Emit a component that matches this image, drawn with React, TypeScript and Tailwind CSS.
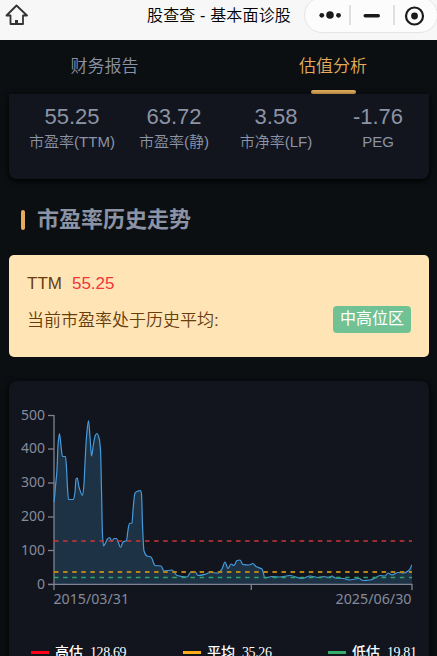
const metrics = [
  { label: '市盈率(TTM)', value: '55.25' },
  { label: '市盈率(静)', value: '63.72' },
  { label: '市净率(LF)', value: '3.58' },
  { label: 'PEG', value: '-1.76' },
];

const ticks = [
  { label: '500', y: 415.5 },
  { label: '400', y: 449 },
  { label: '300', y: 483 },
  { label: '200', y: 517 },
  { label: '100', y: 550.5 },
  { label: '0', y: 584.5 },
];

const levels = [
  { color: '#cb3636', y: 541, width: 1.3 },
  { color: '#b58518', y: 572, width: 2 },
  { color: '#2fa468', y: 577.5, width: 1.3 },
];

const points: [number, number][] = [
  [54, 502], [55.5, 486], [57, 470], [58, 445], [59.5, 433.5], [61, 446], [62.5, 456.5], [65.5, 456.5],
  [66.5, 468], [67.5, 488], [68.5, 499.5], [73.5, 499.5], [75, 492], [76, 479], [77.3, 478], [79, 487],
  [82.5, 495.5], [84, 484], [85, 463], [86.5, 437], [88.5, 420.5], [90, 437], [91.5, 456], [93.5, 444],
  [95.5, 435], [97, 433.5], [99, 438], [100.5, 450], [101.5, 490], [102.5, 535], [103.5, 546], [105.5, 543],
  [107.5, 539], [109.5, 537.5], [112, 541], [114, 538.5], [116.5, 538.5], [118.5, 543], [120.5, 547.5],
  [123, 542], [126.5, 540.5], [128, 530], [129.5, 523.5], [132, 523], [133, 510], [135, 493], [137, 491.5],
  [140.5, 490.5], [141.5, 494], [142.5, 525], [144, 551], [147, 556], [151, 557], [155, 565.5], [161, 566],
  [164, 571], [172, 570], [177, 575.5], [187, 577], [191, 572], [195, 571.5], [198, 575.5], [206, 574],
  [210, 572.5], [218, 573], [222, 569], [225, 562], [228, 568.5], [231, 564], [234, 565.5], [237, 560.5],
  [240, 560], [243, 564.5], [249, 565], [253, 563.5], [256, 566.5], [262, 569], [265, 578], [272, 576.5],
  [280, 577], [290, 575.5], [302, 578.5], [310, 576], [318, 577.5], [324, 576.5], [328, 577.5], [332, 576],
  [335, 578], [344, 578.5], [349, 580], [359, 578.5], [363, 580.5], [370, 580], [375, 578], [380, 575.5],
  [385, 576], [388, 573], [392, 575], [398, 572.5], [404, 573], [408, 571], [410, 569], [412, 565],
];

// horizontal tangents at peaks so the line never overshoots
function smoothPath(pts: [number, number][]) {
  const slope = (i: number) => {
    if (i === 0 || i === pts.length - 1) return 0;
    const a = (pts[i][1] - pts[i - 1][1]) / (pts[i][0] - pts[i - 1][0]);
    const b = (pts[i + 1][1] - pts[i][1]) / (pts[i + 1][0] - pts[i][0]);
    return a * b <= 0 ? 0 : (2 * a * b) / (a + b);
  };
  let d = `M${pts[0][0]} ${pts[0][1]}`;
  for (let i = 1; i < pts.length; i++) {
    const [x0, y0] = pts[i - 1];
    const [x1, y1] = pts[i];
    const h = (x1 - x0) / 3;
    d += ` C${x0 + h} ${y0 + slope(i - 1) * h} ${x1 - h} ${y1 - slope(i) * h} ${x1} ${y1}`;
  }
  return d;
}

function TitleBar() {
  return (
    <header className="relative h-10 shrink-0 bg-[#f7f7f7] text-black">
      <svg className="absolute left-[5px] top-1" width="24" height="22" viewBox="0 0 24 22" fill="none" stroke="#333" strokeWidth="1.8">
        <path d="M11.5 1.5 L1.5 11.5 H5.5 V20 H18 V11.5 H22 Z" strokeLinejoin="round" />
        <path d="M11.5 20 V16" strokeWidth="3" />
      </svg>
      <h1 className="pl-px pt-1 text-center text-base leading-6 tracking-[0.15px]">股查查 - 基本面诊股</h1>
      {/* Capsule menu */}
      <div className="absolute -top-[3px] left-[304px] h-9 w-[134px] rounded-full border border-[#e5e5e5] bg-[#fcfcfc]">
        <svg width="132" height="34" viewBox="305 -2 132 34" fill="#1a1a1a">
          <circle cx="321.8" cy="15.3" r="2.4" />
          <circle cx="330" cy="15" r="3.8" />
          <circle cx="338.5" cy="15.3" r="2.4" />
          <rect x="349.3" y="5" width="1.4" height="20" fill="#d5d5d5" />
          <rect x="363.5" y="14" width="16.5" height="3.4" rx="1.7" />
          <rect x="393.3" y="5" width="1.4" height="20" fill="#d5d5d5" />
          <circle cx="414.5" cy="16" r="8.5" fill="none" stroke="#1a1a1a" strokeWidth="2.2" />
          <circle cx="414.5" cy="16" r="3.4" />
        </svg>
      </div>
    </header>
  );
}

function PeChart() {
  const line = smoothPath(points);
  return (
    <svg className="block font-normal" width="420" height="249" viewBox="9 381 420 249" fontFamily="'Noto Sans', 'Open Sans', sans-serif">
      <g fill="#858b9c" fontSize="14">
        {ticks.map((tick) => (
          <text key={tick.label} x="45" y={tick.y + 4} textAnchor="end">{tick.label}</text>
        ))}
        <text x="53.5" y="604" textLength="75.5" lengthAdjust="spacingAndGlyphs">2015/03/31</text>
        <text x="335.5" y="604" textLength="76" lengthAdjust="spacingAndGlyphs">2025/06/30</text>
      </g>
      <path d={`${line} V584 H54 Z`} fill="#1d3244" />
      {/* Axes */}
      <g stroke="#7d8393" strokeWidth="1.3">
        <path d="M54 415 V590 M48 584.4 H412.5 M251.3 584 V590 M412 584 V590" />
        {ticks.map((tick) => (
          <path key={tick.label} d={`M48 ${tick.y} H54`} />
        ))}
      </g>
      <path d={line} fill="none" stroke="#469bdd" strokeWidth="1.2" />
      {levels.map((level) => (
        <path key={level.y} d={`M54 ${level.y} H412`} stroke={level.color} strokeWidth={level.width} strokeDasharray="4.5 4.6" />
      ))}
    </svg>
  );
}

export default function App() {
  return (
    <div className="flex h-[656px] w-[437px] flex-col overflow-hidden bg-[#0b0f12] font-['Liberation_Sans','Noto_Sans_CJK_SC',sans-serif] font-[350] text-[#8c93a5]">
      <TitleBar />

      {/* Tabs */}
      <nav className="grid h-[54px] shrink-0 grid-cols-[209px_1fr] text-[17px]">
        <div className="flex justify-center pt-[15px] leading-6">财务报告</div>
        <div className="flex flex-col items-center justify-between pl-[20px] pt-[15px] leading-6 text-[#e5ad5b]">
          <span>估值分析</span>
          <span className="h-1 w-[45px] rounded-full bg-[#e5ad5b]" />
        </div>
      </nav>

      {/* Valuation metrics */}
      <section className="ml-[9px] mr-2 grid h-[85px] shrink-0 grid-cols-4 rounded-b-lg bg-[#12151d] pl-[12px] pt-[9px] text-center shadow-[0_2px_6px_#000]">
        {metrics.map((item) => (
          <div key={item.label}>
            <div className="text-[22px] leading-7">{item.value}</div>
            <div className="whitespace-nowrap text-[15px] leading-[22px]">{item.label}</div>
          </div>
        ))}
      </section>

      <div className="flex h-[76px] shrink-0 items-center gap-3 pl-[21px] pt-[6px]">
        <span className="h-5 w-1 rounded-sm bg-[#e5ad5b]" />
        <h2 className="text-[22px] font-bold leading-8">市盈率历史走势</h2>
      </div>

      {/* Current position */}
      <section className="ml-[9px] mr-2 h-[102px] shrink-0 rounded-[5px] bg-[#ffe5b5] pl-[18px] pr-[18px] pt-[17px] text-[17px] text-[#683c0d]">
        <div className="flex gap-[10px] leading-6">
          <span>TTM</span>
          <span className="text-[#f5333f]">55.25</span>
        </div>
        <div className="mt-[10px] flex items-center justify-between">
          <span className="pt-[2px]">当前市盈率处于历史平均:</span>
          <span className="h-[27px] w-[78px] rounded bg-[#70c295] text-center text-base font-normal leading-[25px] text-white">中高位区</span>
        </div>
      </section>

      <section className="ml-[9px] mr-2 mt-6 h-[300px] shrink-0 rounded-t-lg bg-[#12151d] shadow-[0_2px_6px_#000]">
        <PeChart />
        <div className="mt-[13px] flex pl-[22px] font-['Liberation_Serif','Noto_Sans_CJK_SC',serif] text-sm font-normal leading-[18px] text-white">
          <div className="flex w-[152px] items-center">
            <span className="mr-[6px] h-[3px] w-[18px] bg-[#ff0019]" />
            <span className="mr-[7px] font-medium">高估</span>
            <span className="pt-px tracking-[-0.4px]">128.69</span>
          </div>
          <div className="flex w-[145px] items-center">
            <span className="mr-[6px] h-[3px] w-[18px] bg-[#ffae1a]" />
            <span className="mr-[7px] font-medium">平均</span>
            <span className="pt-px tracking-[-0.4px]">35.26</span>
          </div>
          <div className="flex items-center">
            <span className="mr-[6px] h-[3px] w-[18px] bg-[#36ad6a]" />
            <span className="mr-[7px] font-medium">低估</span>
            <span className="pt-px tracking-[-0.4px]">19.81</span>
          </div>
        </div>
      </section>
    </div>
  );
}
